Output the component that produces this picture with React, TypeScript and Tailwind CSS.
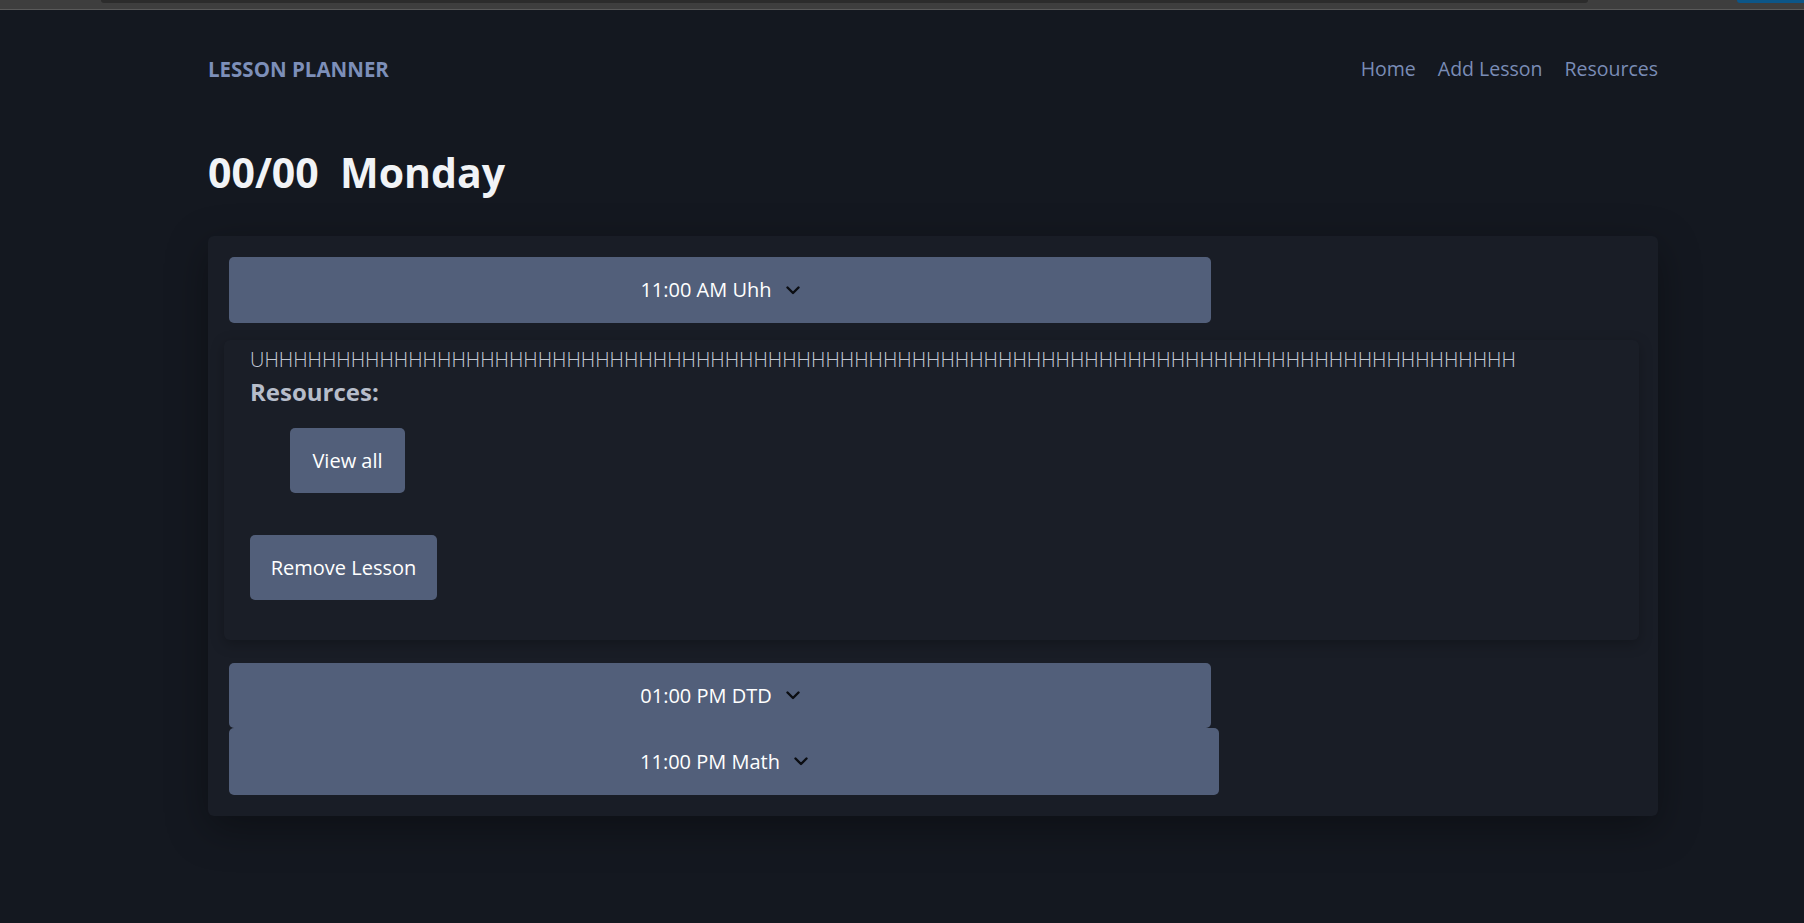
import { ReactNode } from 'react';

const font = { fontFamily: '"Open Sans", "Noto Sans", sans-serif' };

const lessonText = 'U' + 'H'.repeat(87);

function Chevron() {
  return (
    <svg width="14" height="9" viewBox="0 0 14 9" fill="none" className="shrink-0">
      <polyline points="1.5,1.5 7,7 12.5,1.5" stroke="#0b0d12" strokeWidth="2.4" strokeLinecap="round" strokeLinejoin="round" />
    </svg>
  );
}

function LessonToggle({ label, width, height }: { label: string; width: string; height: string }) {
  return (
    <button
      type="button"
      className={`flex items-center justify-center gap-[14px] rounded-[5px] bg-[#525f7a] text-[20px] leading-[28px] text-white ${width} ${height}`}
    >
      <span>{label}</span>
      <Chevron />
    </button>
  );
}

function PanelButton({ children, className = '' }: { children: ReactNode; className?: string }) {
  return (
    <button
      type="button"
      className={`flex h-[65px] items-center justify-center whitespace-nowrap rounded-[5px] bg-[#525f7a] text-[20px] text-white ${className}`}
    >
      {children}
    </button>
  );
}

export default function App() {
  return (
    <div className="min-h-[923px] w-full bg-[#141820]" style={font}>
      {/* browser chrome strip */}
      <div className="relative h-[10px] w-full border-b border-[#5a5a5a] bg-[#3e3e3e]">
        <div className="absolute left-[101px] top-0 h-[3px] w-[1487px] rounded-b-[4px] bg-[#2c2c2c]" />
        <div className="absolute right-0 top-0 h-[3px] w-[67px] rounded-bl-[4px] bg-[#0c5688]" />
      </div>

      <div className="ml-[208px] w-[1450px]">
        <header className="mt-[45px] flex h-[28px] items-center justify-between">
          <span className="text-[20.5px] font-bold leading-[28px] text-[#7d8fb9]">LESSON PLANNER</span>
          <nav className="flex items-center gap-[22px] text-[19.5px] leading-[28px] text-[#7a8cb6]">
            <a href="#">Home</a>
            <a href="#">Add Lesson</a>
            <a href="#">Resources</a>
          </nav>
        </header>

        <h1 className="mt-[61px] whitespace-pre text-[41px] font-bold leading-[57px] text-[#f1f3f6]">
          {'00/00  Monday'}
        </h1>

        <section className="mt-[35px] rounded-[6px] bg-[#191d26] p-[21px] shadow-[0_12px_40px_rgba(0,0,0,0.35)]">
          <LessonToggle label="11:00 AM Uhh" width="w-[982px]" height="h-[66px]" />

          <div className="-ml-[5px] mr-[-2px] mt-[17px] rounded-[6px] bg-[#1a1e27] pb-[40px] pl-[26px] pt-[8px] shadow-[0_4px_14px_rgba(0,0,0,0.25)]">
            <p className="whitespace-nowrap text-[20px] font-light leading-[24px] text-[#c6ccd8]">{lessonText}</p>
            <h3 className="mt-[5px] text-[24px] font-bold leading-[30px] text-[#b7bdca]">Resources:</h3>
            <div className="mt-[21px] pl-[40px]">
              <PanelButton className="w-[115px]">View all</PanelButton>
            </div>
            <PanelButton className="mt-[42px] w-[187px]">Remove Lesson</PanelButton>
          </div>

          <div className="mt-[23px] flex flex-col">
            <LessonToggle label="01:00 PM DTD" width="w-[982px]" height="h-[65px]" />
            <LessonToggle label="11:00 PM Math" width="w-[990px]" height="h-[67px]" />
          </div>
        </section>
      </div>
    </div>
  );
}
